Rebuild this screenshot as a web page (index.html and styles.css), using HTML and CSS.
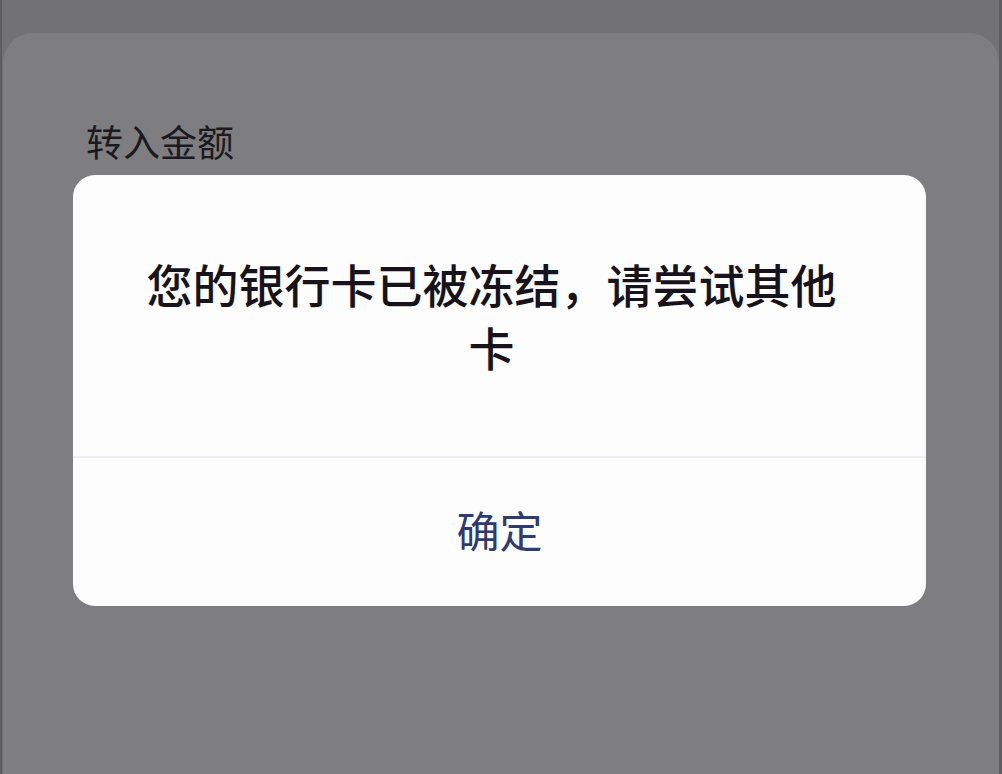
FILE: index.html
```html
<!DOCTYPE html>
<html lang="zh-CN">
<head>
<meta charset="utf-8">
<title>转入金额</title>
<link rel="stylesheet" href="styles.css">
</head>
<body>
<div class="screen">
  <div class="sheet">
    <div class="label">转入金额</div>
  </div>
  <div class="dialog">
    <div class="message">您的银行卡已被冻结，请尝试其他卡</div>
    <div class="button">确定</div>
  </div>
</div>
</body>
</html>
```

FILE: styles.css
```css
html, body {
  margin: 0;
  padding: 0;
}
body {
  width: 1002px;
  height: 774px;
  overflow: hidden;
  background: #727274;
  font-family: "Noto Sans CJK SC", "Noto Sans", sans-serif;
}
.screen {
  position: relative;
  width: 1002px;
  height: 774px;
  display: flex;
  flex-direction: column;
  border-left: 2px solid #5e5e60;
  border-right: 3px solid #5e5e60;
  box-sizing: border-box;
}
.sheet {
  flex: 1;
  margin-top: 33px;
  margin-left: 1px;
  background: #7e7e80;
  border-radius: 30px 30px 0 0;
  padding: 88px 0 0 83px;
}
.label {
  font-size: 37px;
  line-height: 40px;
  color: #1b1a1f;
  font-weight: 400;
}
.dialog {
  position: absolute;
  left: 71px;
  top: 175px;
  width: 853px;
  height: 431px;
  background: #fdfdfe;
  border-radius: 22px;
  display: flex;
  flex-direction: column;
}
.message {
  height: 283px;
  box-sizing: border-box;
  padding: 77px 68px 0 52px;
  text-align: center;
  font-size: 46px;
  line-height: 63px;
  color: #16131b;
  font-weight: 500;
  border-bottom: 2px solid #eef0f4;
}
.button {
  flex: 1;
  display: flex;
  align-items: center;
  justify-content: center;
  padding-bottom: 6px;
  font-size: 43px;
  color: #2f3a6e;
  font-weight: 400;
}
```
